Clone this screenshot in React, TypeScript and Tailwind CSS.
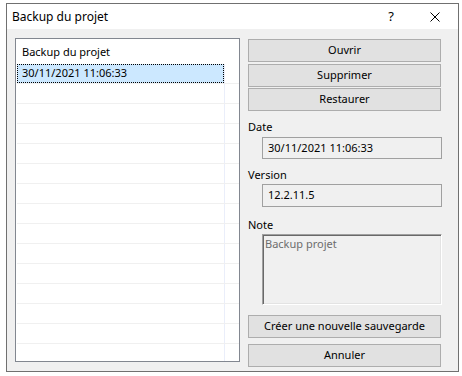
const rows = Array.from({ length: 15 }, (_, i) => i);

const Btn = ({ label, className = "" }: { label: string; className?: string }) => (
  <button
    className={`flex h-[23px] w-[193px] items-center justify-center border border-[#adadad] bg-[#e1e1e1] text-[11px] text-black ${className}`}
  >
    {label}
  </button>
);

export default function App() {
  return (
    <div
      className="h-[376px] w-[462px] bg-white pl-[6px] pt-[3px]"
      style={{ fontFamily: '"Segoe UI", "Noto Sans", sans-serif' }}
    >
      <div className="flex h-[369px] w-[453px] flex-col border border-[#707070] bg-[#f0f0f0]">
        {/* title bar */}
        <div className="flex h-[25px] items-center bg-white pl-[5px]">
          <span className="text-[12px] text-black">Backup du projet</span>
          <span className="ml-auto mr-[36px] text-[13px] text-black">?</span>
          <svg width="10" height="10" viewBox="0 0 10 10" className="mr-[18px]">
            <path d="M0.5 0.5 L9.5 9.5 M9.5 0.5 L0.5 9.5" stroke="#000" strokeWidth="1" />
          </svg>
        </div>

        <div className="flex flex-1 gap-[8px] pl-[8px] pt-[9px]">
          {/* list */}
          <div className="h-[324px] w-[225px] overflow-hidden border border-[#828790] bg-white">
            <div className="flex h-[25px] items-center pl-[6px] pt-[2px] text-[11px] text-black">
              Backup du projet
            </div>
            {rows.map((i) => (
              <div key={i} className="ml-[1px] flex h-[20px] border-b border-[#f0f0f0]">
                <div
                  className={`flex w-[207px] items-center text-[11px] text-black ${
                    i === 0 ? "border border-dotted border-black bg-[#cce8ff] pl-[4px]" : ""
                  }`}
                >
                  {i === 0 ? "30/11/2021 11:06:33" : ""}
                </div>
                <div className="w-[1px] bg-[#eaeefa]" />
              </div>
            ))}
          </div>

          {/* right column */}
          <div className="flex w-[193px] flex-col pt-[1px] text-[11px] text-black">
            <Btn label="Ouvrir" />
            <Btn label="Supprimer" className="mt-[2px]" />
            <Btn label="Restaurer" className="mt-[1px]" />

            <div className="mt-[8px] h-[16px] leading-[16px]">Date</div>
            <div className="ml-[14px] mt-[2px] flex h-[22px] w-[180px] items-center border border-[#a0a0a0] bg-[#f0f0f0] pl-[5px]">
              30/11/2021 11:06:33
            </div>

            <div className="mt-[8px] h-[16px] leading-[16px]">Version</div>
            <div className="ml-[14px] mt-[1px] flex h-[23px] w-[180px] items-center border border-[#a0a0a0] bg-[#f0f0f0] pl-[5px]">
              12.2.11.5
            </div>

            <div className="mt-[10px] h-[16px] leading-[16px]">Note</div>
            <div className="ml-[14px] mt-[1px] h-[71px] w-[180px] border border-b-white border-l-[#a0a0a0] border-r-white border-t-[#a0a0a0] bg-[#f0f0f0] pl-[2px] pt-[1px] text-[#6d6d6d] shadow-[inset_1px_1px_0_#696969,inset_-1px_-1px_0_#e3e3e3]">
              Backup projet
            </div>

            <Btn label="Créer une nouvelle sauvegarde" className="mt-[10px] h-[22px]" />
            <Btn label="Annuler" className="mt-[6px] h-[22px]" />
          </div>
        </div>
      </div>
    </div>
  );
}
